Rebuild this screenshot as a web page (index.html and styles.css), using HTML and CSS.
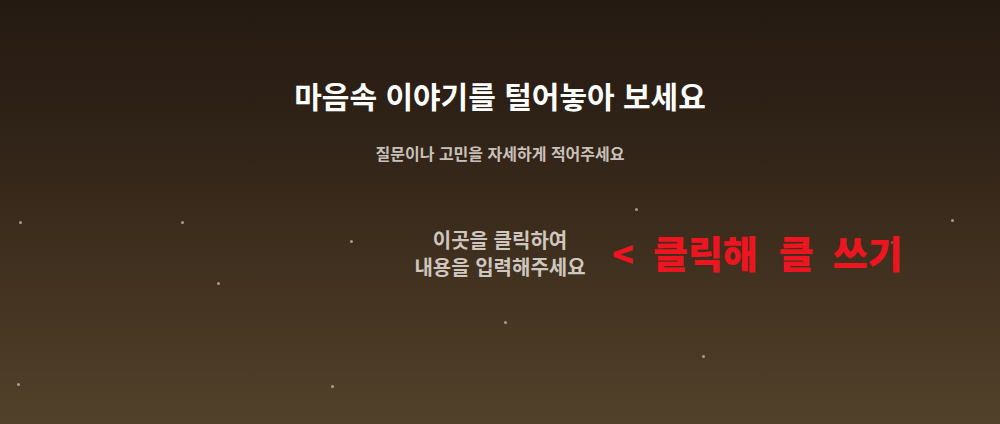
FILE: index.html
```html
<!DOCTYPE html>
<html lang="ko">
<head>
<meta charset="utf-8">
<title>마음속 이야기</title>
<link rel="stylesheet" href="styles.css">
</head>
<body>
<main class="page">
  <div class="stars" aria-hidden="true">
    <span class="star" style="left:19px;top:221px"></span>
    <span class="star" style="left:181px;top:221px"></span>
    <span class="star" style="left:350px;top:240px"></span>
    <span class="star" style="left:217px;top:282px"></span>
    <span class="star" style="left:17px;top:383px"></span>
    <span class="star" style="left:331px;top:385px"></span>
    <span class="star" style="left:504px;top:321px"></span>
    <span class="star" style="left:635px;top:208px"></span>
    <span class="star" style="left:702px;top:355px"></span>
    <span class="star" style="left:951px;top:219px"></span>
    <span class="star dim" style="left:891px;top:241px"></span>
  </div>
  <h1 class="title">마음속 이야기를 털어놓아 보세요</h1>
  <p class="subtitle">질문이나 고민을 자세하게 적어주세요</p>
  <div class="editor">
    <div class="placeholder">이곳을 클릭하여<br>내용을 입력해주세요</div>
    <div class="hint"><span class="arrow">&lt;</span><span class="word wide">클릭해</span><span class="word">클</span><span class="word">쓰기</span></div>
  </div>
</main>
</body>
</html>
```
FILE: styles.css
```css
html, body {
  margin: 0;
  padding: 0;
}
body {
  width: 1000px;
  height: 424px;
  overflow: hidden;
  font-family: "Noto Sans CJK KR", "Noto Sans", sans-serif;
  background: linear-gradient(180deg, #251a12 0%, #2f2217 30%, #3f2f1e 60%, #52412a 100%);
}
.page {
  position: relative;
  height: 424px;
  display: flex;
  flex-direction: column;
  align-items: center;
  padding-top: 77px;
  box-sizing: border-box;
}
.stars {
  position: absolute;
  inset: 0;
}
.star {
  position: absolute;
  width: 3px;
  height: 3px;
  border-radius: 50%;
  background: rgba(205, 192, 178, 0.75);
}
.star.dim {
  background: rgba(205, 192, 178, 0.4);
}
.title {
  margin: 0;
  font-size: 30px;
  line-height: 36px;
  font-weight: 700;
  color: #ffffff;
}
.subtitle {
  margin: 29px 0 0;
  font-size: 16px;
  line-height: 22px;
  font-weight: 700;
  color: #c9c1b9;
}
.editor {
  position: relative;
  margin-top: 62px;
  width: 600px;
  display: flex;
  justify-content: center;
}
.placeholder {
  font-size: 20px;
  line-height: 27px;
  font-weight: 700;
  color: #cfc7bf;
  text-align: center;
}
.hint {
  position: absolute;
  left: 412px;
  top: 4px;
  display: flex;
  align-items: center;
  gap: 19px;
  font-size: 38px;
  line-height: 44px;
  font-weight: 900;
  color: #ec1520;
  white-space: nowrap;
}
.hint .arrow {
  font-size: 36px;
}
.hint .wide {
  margin-right: 2px;
}
```
